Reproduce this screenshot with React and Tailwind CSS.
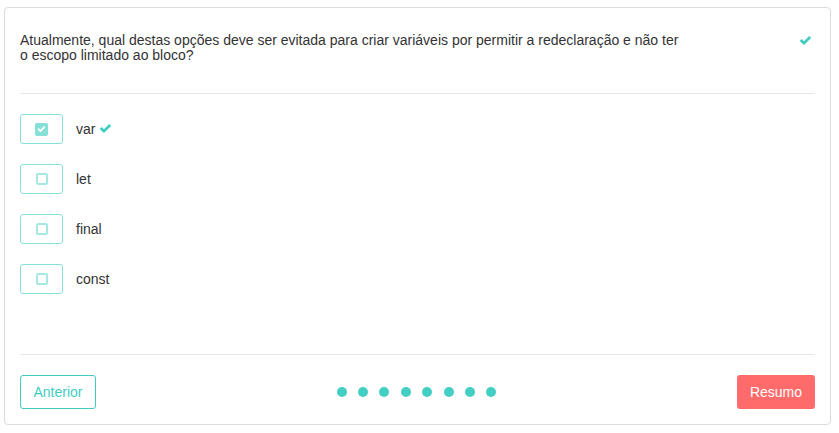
import React, { useState } from 'react';

const options = ['var', 'let', 'final', 'const'];

const Check = ({ className }) => (
  <svg viewBox="0 0 14 11" className={className} fill="currentColor">
    <path d="M0.6 5.4 L2.8 3.3 L5.3 5.7 L11 0 L13.2 2.1 L5.3 10 Z" />
  </svg>
);

const App = () => {
  const [selected, setSelected] = useState(0);

  return (
    <div className="w-[839px] h-[433px] bg-white pt-[7px] pl-[4px]" style={{ fontFamily: '"Liberation Sans", Arial, sans-serif' }}>
      <div className="w-[827px] h-[418px] border border-[#dcdcdc] rounded-[4px] px-[15px] pt-[25px] pb-[15px] flex flex-col">
        {/* Question */}
        <div className="flex justify-between items-start h-[60px] shrink-0">
          <p className="text-[14px] leading-[15px] text-[#333]">
            Atualmente, qual destas opções deve ser evitada para criar variáveis por permitir a redeclaração e não ter
            <br />
            o escopo limitado ao bloco?
          </p>
          <Check className="w-[13px] h-[10px] text-[#3fcdc1] mt-[3px] mr-[3px]" />
        </div>

        <div className="h-px bg-[#e8e8e8] shrink-0" />

        {/* Options */}
        <div className="flex flex-col gap-[20px] pt-[20px] h-[260px] shrink-0">
          {options.map((opt, i) => (
            <div key={opt} className="flex items-center h-[30px] cursor-pointer" onClick={() => setSelected(i)}>
              <div className="w-[43px] h-[30px] border border-[#86e2da] rounded-[3px] flex items-center justify-center">
                {selected === i ? (
                  <div className="w-[13px] h-[13px] rounded-[2px] bg-[#86e0d7] flex items-center justify-center">
                    <Check className="w-[9px] h-[7px] text-white" />
                  </div>
                ) : (
                  <div className="w-[12px] h-[12px] rounded-[2px] border-2 border-[#a6e8e2]" />
                )}
              </div>
              <span className="ml-[13px] text-[14px] text-[#333]">{opt}</span>
              {selected === i && <Check className="ml-[4px] w-[13px] h-[10px] text-[#3fcdc1]" />}
            </div>
          ))}
        </div>

        <div className="h-px bg-[#e8e8e8] shrink-0" />

        {/* Footer */}
        <div className="flex items-center justify-between mt-[20px] h-[34px] shrink-0">
          <button className="h-[34px] w-[76px] border border-[#3fcdc1] rounded-[3px] text-[14px] text-[#3fcdc1] bg-white">
            Anterior
          </button>
          <div className="flex gap-[11.4px]">
            {Array.from({ length: 8 }).map((_, i) => (
              <span key={i} className="w-[10px] h-[10px] rounded-full bg-[#43cfc3]" />
            ))}
          </div>
          <button className="h-[34px] w-[78px] rounded-[3px] text-[14px] text-white bg-[#ff6b6b]">
            Resumo
          </button>
        </div>
      </div>
    </div>
  );
};

export default App;
